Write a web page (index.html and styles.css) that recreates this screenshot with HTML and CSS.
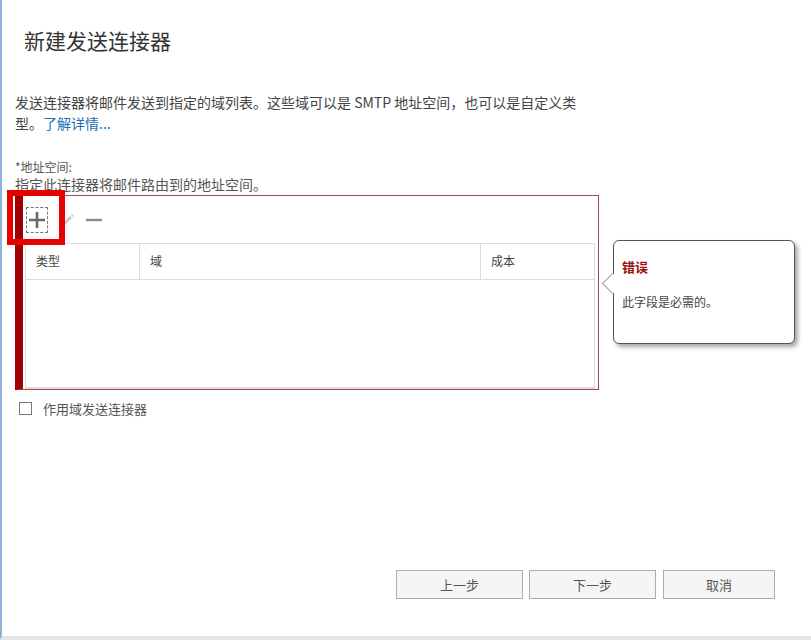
FILE: index.html
```html
<!DOCTYPE html>
<html lang="zh-CN">
<head>
<meta charset="utf-8">
<link rel="stylesheet" href="styles.css">
</head>
<body>
<div class="page">
  <div class="content">
    <h1 class="title">新建发送连接器</h1>
    <div class="desc">
      <div class="desc-line">发送连接器将邮件发送到指定的域列表。这些域可以是 SMTP 地址空间，也可以是自定义类</div>
      <div class="desc-line">型。<a class="link" href="#">了解详情...</a></div>
    </div>
    <div class="field-label">*地址空间:</div>
    <div class="field-hint">指定此连接器将邮件路由到的地址空间。</div>
    <div class="field-row">
      <div class="listbox">
        <div class="toolbar">
          <span class="tool add">
            <svg width="18" height="18" viewBox="0 0 18 18"><path d="M9 1v16M1 9h16" stroke="#6b6b6b" stroke-width="2.6" fill="none"/></svg>
          </span>
          <span class="tool edit">
            <svg width="14" height="14" viewBox="0 0 14 14"><path d="M2 12l1-3 6-6 2 2-6 6z" fill="#c9c9c9"/><path d="M10 2l1-1 2 2-1 1z" fill="#c9c9c9"/></svg>
          </span>
          <span class="tool remove">
            <svg width="16" height="16" viewBox="0 0 16 16"><path d="M0 8h16" stroke="#8a8a8a" stroke-width="2.4"/></svg>
          </span>
          <span class="highlight"></span>
        </div>
        <div class="grid">
          <div class="grid-head">
            <div class="col c1">类型</div>
            <div class="col c2">域</div>
            <div class="col c3">成本</div>
          </div>
          <div class="grid-body"></div>
        </div>
      </div>
      <div class="tip">
        <div class="tip-title">错误</div>
        <div class="tip-text">此字段是必需的。</div>
      </div>
    </div>
    <label class="check"><span class="box"></span>作用域发送连接器</label>
  </div>
  <div class="buttons">
    <button class="btn back">上一步</button>
    <button class="btn next">下一步</button>
    <button class="btn cancel">取消</button>
  </div>
</div>
</body>
</html>
```
FILE: styles.css
```css
html, body {
  margin: 0;
  padding: 0;
  background: #fff;
}
body {
  font-family: "Noto Sans CJK SC", "Noto Sans", "Liberation Sans", sans-serif;
  font-size: 13px;
  color: #444;
}
.page {
  width: 811px;
  height: 636px;
  border-left: 2px solid #8db4d8;
  border-bottom: 4px solid #e6e6e6;
  box-sizing: content-box;
  position: relative;
}
.content {
  padding: 0 0 0 13px;
}
.title {
  margin: 0;
  padding: 25px 0 0 9px;
  font-size: 21px;
  font-weight: normal;
  color: #333;
  line-height: 30px;
  height: 60px;
  box-sizing: border-box;
}
.desc {
  margin: 32px 0 0;
  font-size: 14px;
  line-height: 21px;
  color: #444;
}
.desc-line {
  white-space: nowrap;
}
.link {
  color: #1f6fb8;
  text-decoration: none;
}
.field-label {
  margin-top: 25px;
  font-size: 12px;
  line-height: 16px;
  color: #555;
}
.field-hint {
  font-size: 14px;
  line-height: 18px;
  color: #555;
}
.field-row {
  display: flex;
  align-items: flex-start;
}
.listbox {
  width: 584px;
  height: 195px;
  box-sizing: border-box;
  border: 1px solid #a9474a;
  border-left: 8px solid #a10000;
  padding: 0 3px 0 2px;
  display: flex;
  flex-direction: column;
  margin-top: 2px;
}
.toolbar {
  height: 47px;
  display: flex;
  align-items: center;
  position: relative;
  padding-left: 1px;
}
.tool {
  display: flex;
  align-items: center;
  justify-content: center;
}
.add {
  width: 22px;
  height: 26px;
  border: 1px dashed #777;
  box-sizing: border-box;
}
.edit {
  margin-left: 13px;
}
.remove {
  margin-left: 11px;
}
.highlight {
  position: absolute;
  left: -18px;
  top: -6px;
  width: 58px;
  height: 55px;
  box-sizing: border-box;
  border: 6px solid #e60000;
}
.grid {
  flex: 1;
  border: 1px solid #d5dde0;
  border-bottom: 2px solid #d5dde0;
  display: flex;
  flex-direction: column;
}
.grid-head {
  display: flex;
  height: 35px;
  border-bottom: 1px solid #d5dde0;
}
.col {
  padding: 8px 0 0 10px;
  color: #444;
  font-size: 12px;
  box-sizing: border-box;
}
.c1 {
  width: 114px;
  border-right: 1px solid #d5dde0;
}
.c2 {
  width: 341px;
  border-right: 1px solid #d5dde0;
}
.c3 {
  flex: 1;
}
.grid-body {
  flex: 1;
}
.tip {
  position: relative;
  margin-left: 14px;
  margin-top: 47px;
  width: 182px;
  height: 104px;
  box-sizing: border-box;
  border: 1px solid #555;
  border-radius: 6px;
  box-shadow: 3px 3px 4px rgba(0, 0, 0, 0.35);
  padding: 17px 0 0 8px;
  background: #fff;
}
.tip::before {
  content: "";
  position: absolute;
  left: -9px;
  top: 35px;
  width: 14px;
  height: 14px;
  background: #fff;
  border-left: 1px solid #999;
  border-bottom: 1px solid #999;
  transform: rotate(45deg);
}
.tip-title {
  color: #9c1010;
  font-weight: bold;
  font-size: 13px;
  line-height: 18px;
}
.tip-text {
  margin-top: 17px;
  color: #444;
  font-size: 12px;
  line-height: 18px;
}
.check {
  display: flex;
  align-items: center;
  margin-top: 9px;
  margin-left: 4px;
  color: #555;
  font-size: 13px;
}
.box {
  width: 13px;
  height: 13px;
  border: 1px solid #777;
  box-sizing: border-box;
  margin-right: 11px;
}
.buttons {
  position: absolute;
  left: 394px;
  top: 570px;
  display: flex;
  gap: 6px;
}
.btn {
  height: 29px;
  background: #f5f5f5;
  border: 1px solid #adadad;
  font-family: inherit;
  font-size: 13px;
  color: #555;
  padding: 0;
}
.back, .next {
  width: 127px;
}
.cancel {
  width: 112px;
  margin-left: 1px;
}
```
